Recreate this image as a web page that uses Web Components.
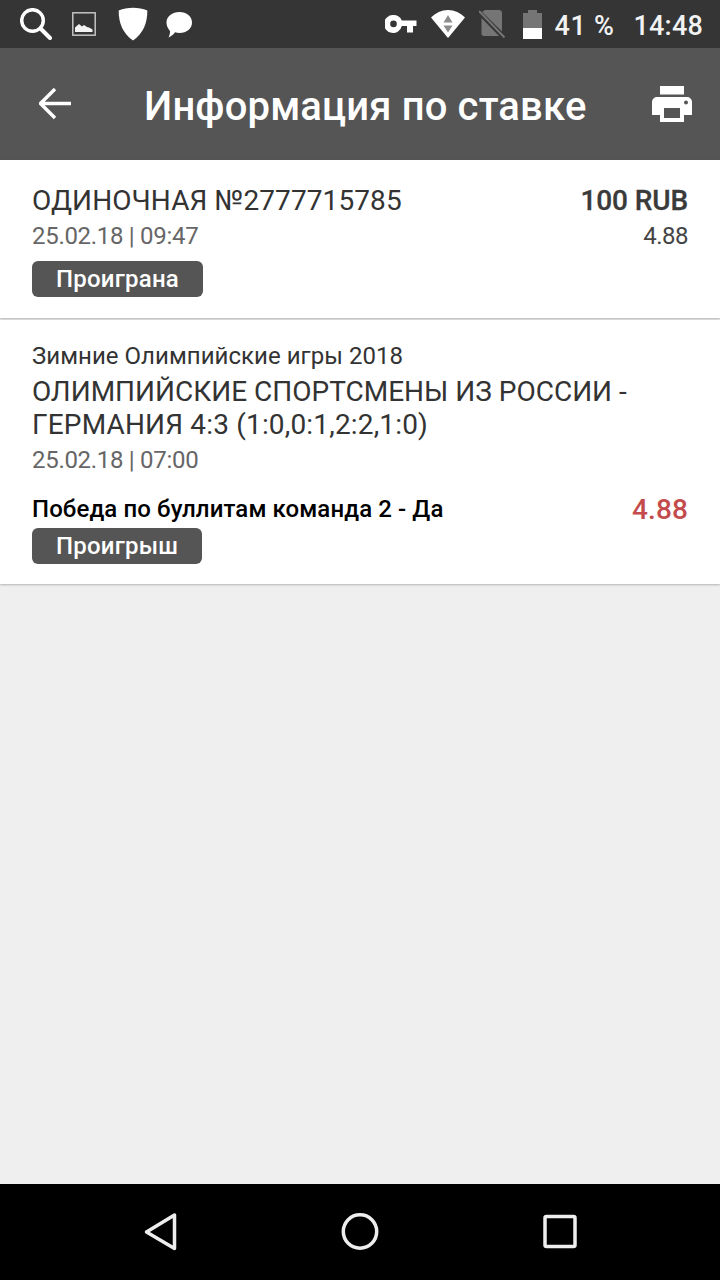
<!DOCTYPE html>
<html lang="ru">
<head>
<meta charset="utf-8">
<title>Информация по ставке</title>
<style>
  html, body { margin: 0; height: 100%; }
  body { font-family: Roboto, "Noto Sans", sans-serif; background: #efefef; }
  bet-screen { height: 1280px; }
</style>
</head>
<body>
<bet-screen>
  <status-bar slot="status"></status-bar>
  <app-bar slot="bar">Информация по ставке</app-bar>
  <bet-summary title-text="ОДИНОЧНАЯ №2777715785" date="25.02.18 | 09:47" amount="100 RUB" odds="4.88" status="Проиграна"></bet-summary>
  <bet-event league="Зимние Олимпийские игры 2018" date="25.02.18 | 07:00" pick="Победа по буллитам команда 2 - Да" odds="4.88" status="Проигрыш">ОЛИМПИЙСКИЕ СПОРТСМЕНЫ ИЗ РОССИИ - <span style="letter-spacing:.17px">ГЕРМАНИЯ 4:3 (1:0,0:1,2:2,1:0)</span></bet-event>
  <nav-bar slot="nav"></nav-bar>
</bet-screen>

<script>
function shadow(el, html) {
  el.attachShadow({ mode: 'open' }).innerHTML = html;
}

customElements.define('bet-screen', class extends HTMLElement {
  constructor() {
    super();
    shadow(this, `<style>
      :host { display: flex; flex-direction: column; width: 720px; background: #efefef; }
      main { flex: 1; display: flex; flex-direction: column; }
    </style>
    <slot name="status"></slot><slot name="bar"></slot>
    <main><slot></slot></main>
    <slot name="nav"></slot>`);
  }
});

customElements.define('status-bar', class extends HTMLElement {
  constructor() {
    super();
    shadow(this, `<style>
      :host { display: flex; align-items: center; height: 48px; background: #353535; color: #f2f2f2; box-sizing: border-box; padding: 0 17px 0 20px; }
      svg { display: block; flex: none; }
      .left, .right { display: flex; align-items: center; }
      .right { margin-left: auto; }
      .text { font-size: 27px; font-weight: 500; line-height: 48px; padding-top: 3px; white-space: nowrap; }
    </style>
    <div class="left">
      <svg width="32" height="32" viewBox="0 0 32 32" fill="none" stroke="#fff"><circle cx="12.500" cy="12.500" r="10.800" stroke-width="3.500"/><path d="M20.500 20.500 30 30" stroke-width="4" stroke-linecap="round"/></svg>
      <svg style="margin-left:20px" width="24" height="24" viewBox="0 0 24 24"><rect x=".8" y=".8" width="22.400" height="22.400" fill="#353535" stroke="#c4c4c4" stroke-width="1.500"/><path d="M3 20v-4.500l4-3.500 3 2.500 2-1.500 3 2 2 .5 3.500 2V20z" fill="#f4f4f4"/></svg>
      <svg style="margin-left:22px" width="30" height="34" viewBox="0 0 30 34"><path d="M.7 3.500C5 1.800 10 .8 15 .8s10 1 14.300 2.700c.2 12-4 23-14.300 30C4.700 26.500.5 15.500.7 3.500z" fill="#fff"/></svg>
      <svg style="margin-left:17px" width="28" height="28" viewBox="0 0 28 28"><path d="M14.500 2C21.700 2 27 6.500 27 12.500s-5.300 10.500-12.500 10.500c-1.700 0-3-.2-4.500-.7-1.500 2.500-4 4-6.500 5.200 1-2 1.700-4.400 1.500-6.500C2.800 18.500 1.500 15.500 1.500 12.500c0-6 5.800-10.500 13-10.500z" fill="#fff"/></svg>
    </div>
    <div class="right">
      <svg width="32" height="18" viewBox="0 0 32 18"><path fill-rule="evenodd" d="M8.500 0a9 9 0 0 1 8.300 5.500H31.500v5.500H28v6.500h-6V11h-5.200A9 9 0 1 1 8.500 0zm0 5.600a3.300 3.300 0 1 0 0 6.600 3.300 3.300 0 0 0 0-6.600z" fill="#fff"/></svg>
      <svg style="margin-left:14px" width="34" height="28" viewBox="0 0 34 28"><path d="M0 7.500C4.500 3 10.500 0 17 0s12.500 3 17 7.500L17 28z" fill="#fff"/><path d="M17 5l4.500 7.500h-9zM17 22.500l-4.500-7h9z" fill="#8c8c8c"/></svg>
      <svg style="margin-left:14px" width="26" height="28" viewBox="0 0 26 28"><path d="M6 0h14a3 3 0 0 1 3 3v18.500L3 2zM2.500 8 20 26H5a2.500 2.500 0 0 1-2.500-2.500z" fill="#757575"/><path d="M0 1l25.500 26.500" stroke="#757575" stroke-width="2"/></svg>
      <svg style="margin-left:18px" width="19" height="29" viewBox="0 0 19 29"><path d="M5 0h9v3h5v26H0V3h5z" fill="#757575"/><rect y="18" width="19" height="11" fill="#fff"/></svg>
      <span class="text" style="margin-left:12px;letter-spacing:.7px">41 %</span>
      <span class="text" style="margin-left:19px;letter-spacing:.2px">14:48</span>
    </div>`);
  }
});

customElements.define('app-bar', class extends HTMLElement {
  constructor() {
    super();
    shadow(this, `<style>
      :host { display: flex; align-items: center; height: 112px; background: #555; color: #fff; box-sizing: border-box; padding: 0 28px 0 39px; }
      svg { display: block; flex: none; }
      h1 { margin: 6px 0 0 73px; font-size: 40px; font-weight: 500; letter-spacing: .15px; line-height: 60px; flex: 1; white-space: nowrap; }
    </style>
    <svg width="32" height="32" viewBox="0 0 32 32" fill="none" stroke="#fff" stroke-width="3.400"><path d="M1.500 15.500H32M16 1 1.500 15.500 16 30"/></svg>
    <h1><slot></slot></h1>
    <svg width="40" height="36" viewBox="0 0 40 36"><path fill="#fff" fill-rule="evenodd" d="M8 0h24v8.500H8zM5 11h30a5 5 0 0 1 5 5v13h-8v7H8v-7H0V16a5 5 0 0 1 5-5zm7 11v10h16V22zm22-7.500a2 2 0 1 0 0 4 2 2 0 0 0 0-4z"/></svg>`);
  }
});

// Rounded grey label holding a result word
customElements.define('status-chip', class extends HTMLElement {
  constructor() {
    super();
    shadow(this, `<style>
      :host { display: inline-block; height: 36px; line-height: 36px; padding: 0 24px; border-radius: 6px; background: #555; color: #fff; font-size: 24px; font-weight: 500; letter-spacing: .22px; white-space: nowrap; }
    </style><slot></slot>`);
  }
});

const cardBase = `
  :host { display: block; background: #fff; box-sizing: border-box; padding: 0 32px; box-shadow: 0 1px 2px rgba(0,0,0,.25); }
  .row { display: flex; justify-content: space-between; }
  .date { font-size: 24px; color: #666; line-height: 34px; letter-spacing: -.3px; }
  .upper { font-size: 28px; color: #333; }
  status-chip { display: inline-block; vertical-align: top; }
`;

customElements.define('bet-summary', class extends HTMLElement {
  constructor() {
    super();
    const a = n => this.getAttribute(n);
    shadow(this, `<style>${cardBase}
      :host { height: 158px; padding-top: 23px; }
      .upper { line-height: 36px; letter-spacing: .1px; }
      .amount { font-size: 28px; font-weight: 500; color: #3a3a3a; line-height: 36px; letter-spacing: -.1px; -webkit-text-stroke: .3px #3a3a3a; }
      .odds { font-size: 24px; color: #444; line-height: 34px; letter-spacing: -.5px; }
      .chip { margin-top: 8px; }
    </style>
    <div class="row"><div class="upper">${a('title-text')}</div><div class="amount">${a('amount')}</div></div>
    <div class="row"><div class="date">${a('date')}</div><div class="odds">${a('odds')}</div></div>
    <div class="chip"><status-chip>${a('status')}</status-chip></div>`);
  }
});

customElements.define('bet-event', class extends HTMLElement {
  constructor() {
    super();
    const a = n => this.getAttribute(n);
    shadow(this, `<style>${cardBase}
      :host { height: 264px; margin-top: 2px; padding-top: 19px; }
      .league { font-size: 24px; color: #333; line-height: 34px; letter-spacing: .04px; }
      .upper { line-height: 33px; margin-top: 2px; }
      .date { margin-top: 2px; }
      .pick { margin-top: 15px; align-items: center; height: 34px; }
      .pick b { font-size: 24px; font-weight: 500; color: #000; letter-spacing: .1px; }
      .pick span { font-size: 28px; font-weight: 500; color: #c44b4b; letter-spacing: .1px; }
      .chip { margin-top: 2px; }
    </style>
    <div class="league">${a('league')}</div>
    <div class="upper"><slot></slot></div>
    <div class="date">${a('date')}</div>
    <div class="row pick"><b>${a('pick')}</b><span>${a('odds')}</span></div>
    <div class="chip"><status-chip>${a('status')}</status-chip></div>`);
  }
});

customElements.define('nav-bar', class extends HTMLElement {
  constructor() {
    super();
    shadow(this, `<style>
      :host { display: block; height: 96px; background: #000; margin-top: auto; }
      div { display: grid; grid-template-columns: repeat(3, 1fr); width: 600px; height: 96px; margin: 0 auto; place-items: center; }
      svg { display: block; fill: none; stroke: #eee; stroke-width: 3.500; stroke-linejoin: round; }
    </style>
    <div>
      <svg width="36" height="40" viewBox="0 0 36 40"><path d="M32.500 3v33.500L4.500 20z"/></svg>
      <svg width="40" height="40" viewBox="0 0 40 40"><circle cx="20" cy="19.500" r="16.700"/></svg>
      <svg width="36" height="36" viewBox="0 0 36 36"><rect x="3" y="2.500" width="30" height="30" rx="1.500"/></svg>
    </div>`);
  }
});
</script>
</body>
</html>
